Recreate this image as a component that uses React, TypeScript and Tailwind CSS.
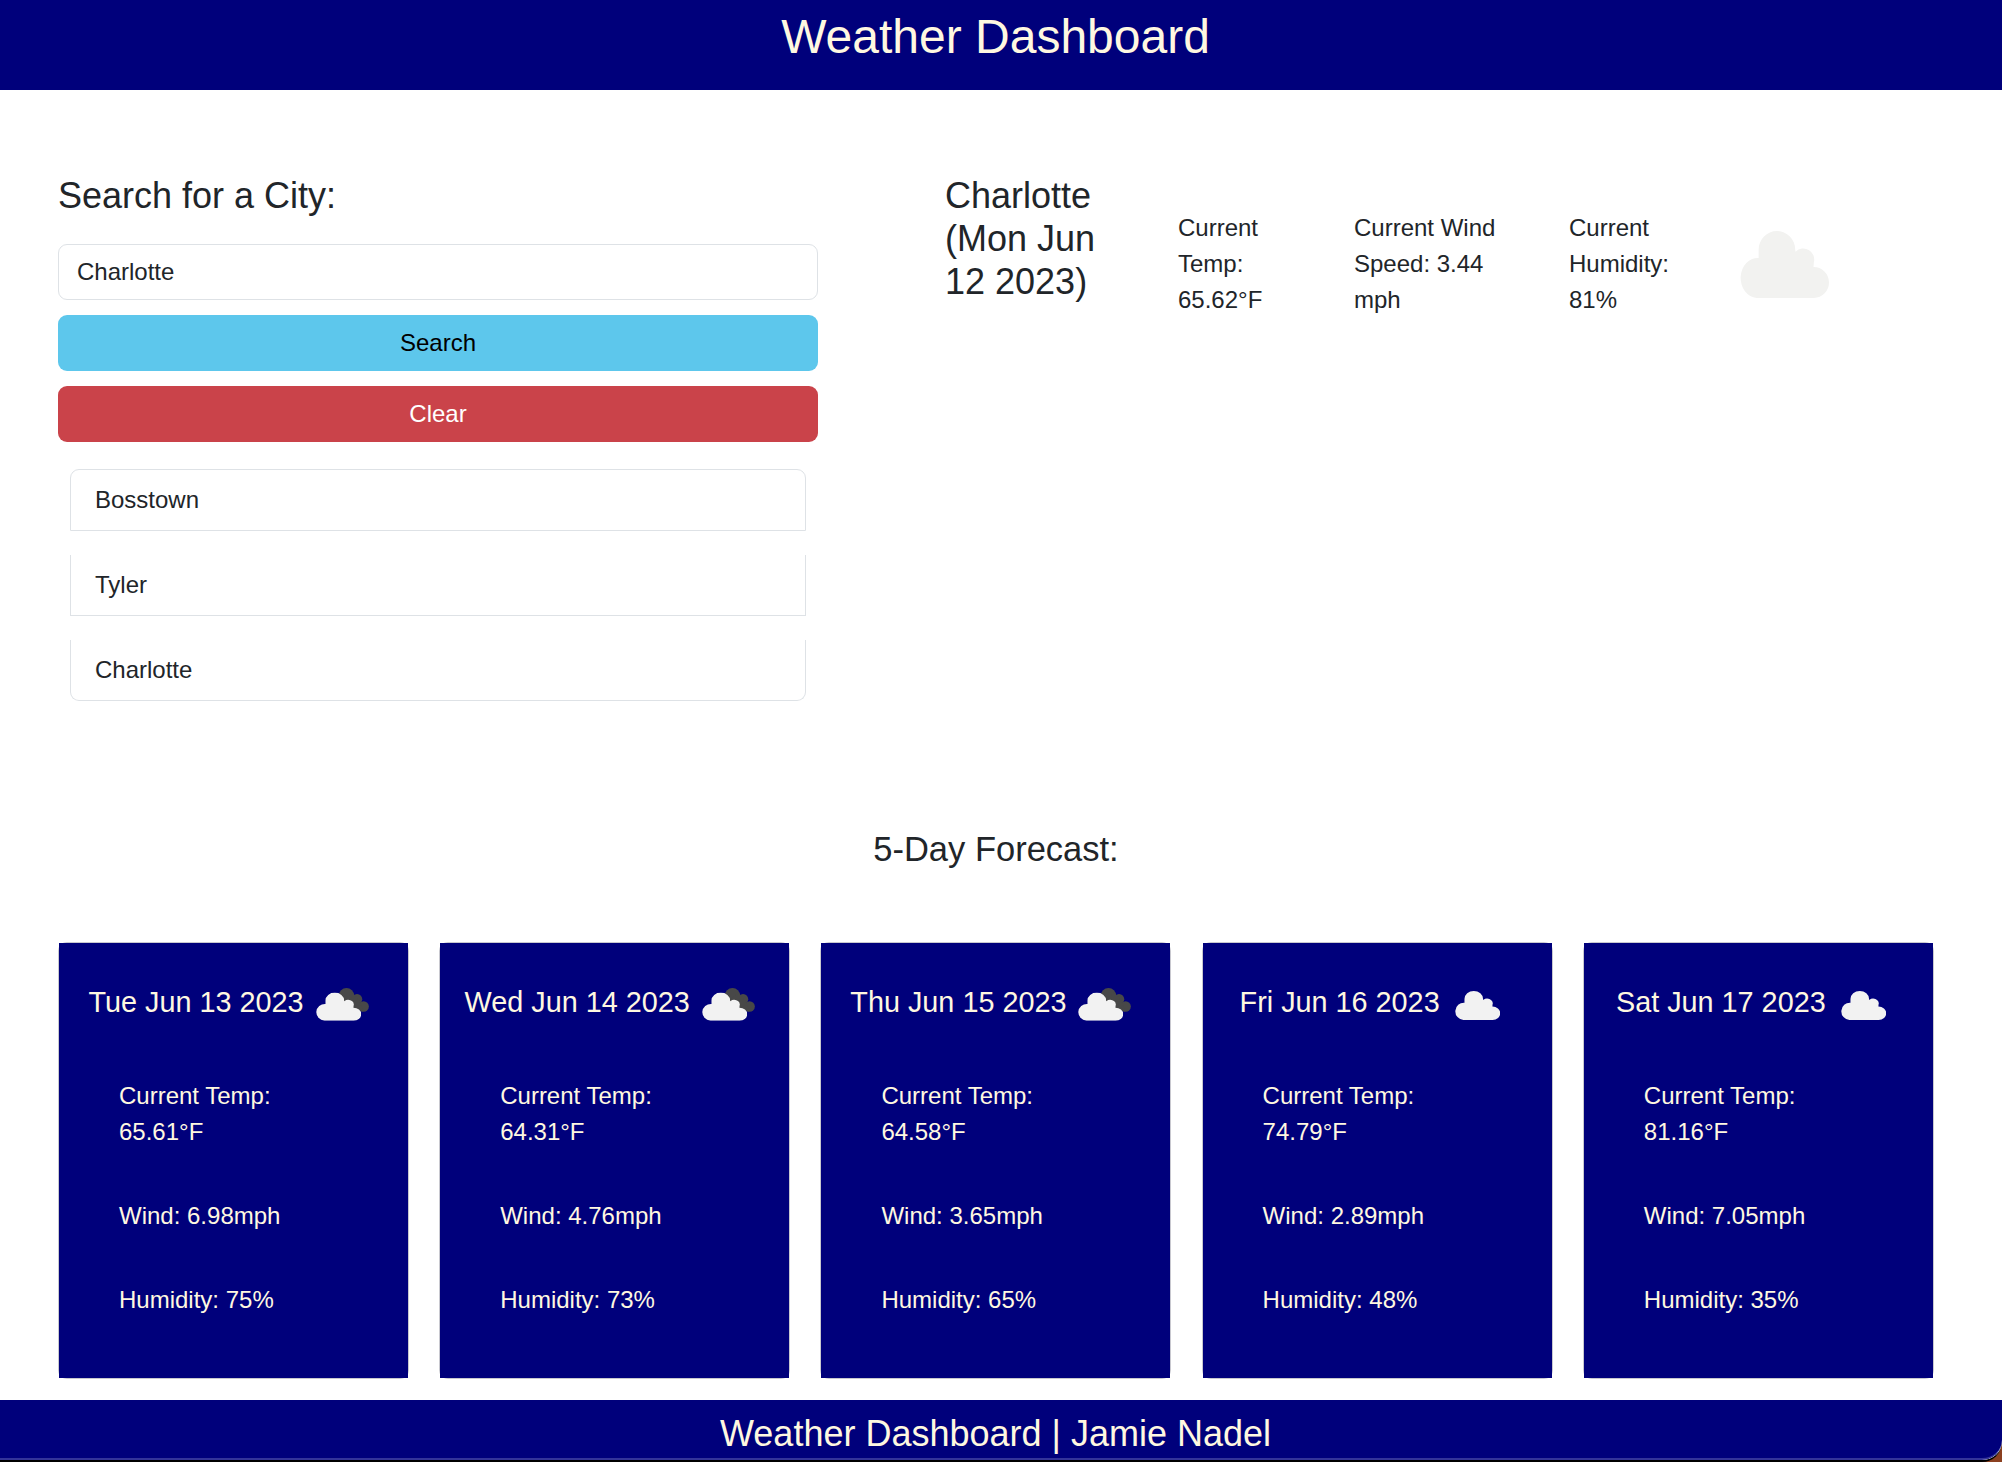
import React from "react";

const cities = ["Bosstown", "Tyler", "Charlotte"];

const forecast = [
  { day: "Tue Jun 13 2023", temp: "65.61", wind: "6.98", humidity: 75, broken: true },
  { day: "Wed Jun 14 2023", temp: "64.31", wind: "4.76", humidity: 73, broken: true },
  { day: "Thu Jun 15 2023", temp: "64.58", wind: "3.65", humidity: 65, broken: true },
  { day: "Fri Jun 16 2023", temp: "74.79", wind: "2.89", humidity: 48, broken: false },
  { day: "Sat Jun 17 2023", temp: "81.16", wind: "7.05", humidity: 35, broken: false },
];

function CloudShape() {
  return (
    <path d="M50 201A51 60 0 0 1 56 81L56 56A55 56 0 0 1 166 56L167 62A33 33 0 0 1 222 94L221 108A46 46.5 0 0 1 222 201Z" />
  );
}

function Cloud({ className }: { className: string }) {
  return (
    <svg viewBox="0 0 266 201" preserveAspectRatio="none" className={className}>
      <CloudShape />
    </svg>
  );
}

function BrokenClouds() {
  return (
    <svg viewBox="0 0 160 100" preserveAspectRatio="none" className="h-[33px] w-[53px]">
      <g fill="#484848">
        <circle cx="92" cy="23" r="23" />
        <circle cx="124" cy="34" r="15.5" />
        <circle cx="143.5" cy="56" r="16" />
        <path d="M80 40L110 14L132 40L142 72L110 62Z" />
      </g>
      <svg x="0" y="14" width="136" height="85" viewBox="0 0 266 201" preserveAspectRatio="none" fill="#f2f2f2">
        <CloudShape />
      </svg>
    </svg>
  );
}

export default function App() {
  return (
    <div className="h-[1462px] w-[2002px] overflow-hidden bg-[#8b4020] font-['Liberation_Sans',Arial,sans-serif] text-2xl leading-9 text-[#212529]">
      <div className="flex h-full flex-col overflow-hidden rounded-br-[20px] border-b-2 border-black bg-white">
        <header className="h-[90px] bg-[#00007b] pr-[11px] pt-2 text-center text-[48px] leading-[58px] text-[#fff8e1]">
          <h1>Weather Dashboard</h1>
        </header>

        <main className="flex h-[853px] flex-col pl-[58px] pr-[68px]">
          <div className="flex">
            <section className="w-[760px] pt-[84px]">
              <h3 className="text-4xl leading-[43px]">Search for a City:</h3>
              <input
                readOnly
                value="Charlotte"
                className="mt-[27px] block h-14 w-full rounded-[9px] border border-[#dee2e6] px-[18px] outline-none"
              />
              <button className="mt-[15px] block h-14 w-full rounded-[9px] bg-[#5dc7ec] text-black">Search</button>
              <button className="mt-[15px] block h-14 w-full rounded-[9px] bg-[#ca434a] text-white">Clear</button>
              <ul className="mx-3 mt-[27px] flex flex-col gap-6">
                {cities.map((city) => (
                  <li
                    key={city}
                    className="h-[61px] border border-t-0 border-[#dee2e6] px-6 pt-3 first:h-[62px] first:rounded-t-[9px] first:border-t last:rounded-b-[9px]"
                  >
                    {city}
                  </li>
                ))}
              </ul>
            </section>

            <section className="ml-[127px] flex pt-[84px]">
              <h3 className="w-[233px] text-4xl leading-[43px]">
                Charlotte
                <br />
                (Mon Jun
                <br />
                12 2023)
              </h3>
              <p className="w-[176px] pt-9">
                Current
                <br />
                Temp:
                <br />
                65.62°F
              </p>
              <p className="w-[215px] pt-9">
                Current Wind
                <br />
                Speed: 3.44
                <br />
                mph
              </p>
              <p className="w-[171px] pt-9">
                Current
                <br />
                Humidity:
                <br />
                81%
              </p>
              <Cloud className="mt-[57px] h-[67px] w-[88.5px] fill-[#f2f2f0]" />
            </section>
          </div>

          <h3 className="mt-auto mb-[72px] text-center text-[34.5px] leading-[43px]">5-Day Forecast:</h3>
        </main>

        <section className="flex h-[457px] justify-between pl-[58px] pr-[68.2px]">
          {forecast.map((f) => (
            <article key={f.day} className="-mt-px h-[437px] w-[351px] rounded-[9px] border border-[#c8c8cf]">
              <div className="-mx-px h-full border-x border-transparent bg-[#00007b] bg-clip-padding text-[#fff8e1]">
                <div className="flex h-[77px] justify-center pt-[41px]">
                  <h4 className="text-[28.8px] leading-9">{f.day}</h4>
                  {f.broken ? (
                    <span className="ml-3 mr-[10px] mt-1">
                      <BrokenClouds />
                    </span>
                  ) : (
                    <Cloud className="ml-[15px] mr-[15px] mt-[7px] h-[29px] w-[45px] fill-[#f2f2f2]" />
                  )}
                </div>
                <div className="pl-[60px] pt-[58px]">
                  <p>
                    Current Temp:
                    <br />
                    {f.temp}°F
                  </p>
                  <p className="mt-12">Wind: {f.wind}mph</p>
                  <p className="mt-12">Humidity: {f.humidity}%</p>
                </div>
              </div>
            </article>
          ))}
        </section>

        <footer className="h-[60px] rounded-br-[20px] border-b-2 border-[#333399] bg-[#00007b] pr-[11px] pt-3 text-center text-4xl leading-[43px] text-[#fff8e1]">
          Weather Dashboard | Jamie Nadel
        </footer>
      </div>
    </div>
  );
}
